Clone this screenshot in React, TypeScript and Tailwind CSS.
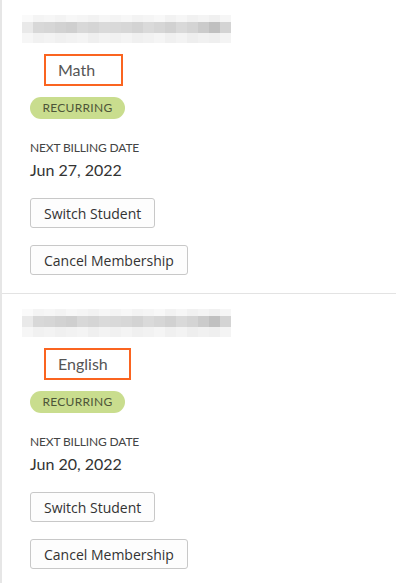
import React from 'react';

const topRow = ['#fafafa', '#f4f4f4', '#f6f6f6', '#f3f3f3', '#f7f7f7', '#f5f5f5', '#f2f2f2', '#f6f6f6', '#f4f4f4', '#f7f7f7', '#f3f3f3', '#f5f5f5', '#f8f8f8', '#f2f2f2', '#f6f6f6', '#f1f1f1', '#f4f4f4', '#f0f0f0', '#f6f6f6'];
const midRow = ['#e9e9e9', '#d8d8d8', '#d6d6d6', '#d2d2d2', '#cfcfcf', '#d8d8d8', '#d5d5d5', '#dadada', '#d9d9d9', '#d7d7d7', '#d3d3d3', '#dadada', '#d6d6d6', '#d1d1d1', '#d9d9d9', '#d4d4d4', '#cbcbcb', '#c0c0c0', '#d4d4d4'];
const botRow = ['#f6f6f6', '#f1f1f1', '#f3f3f3', '#f0f0f0', '#f2f2f2', '#f4f4f4', '#efefef', '#f3f3f3', '#f1f1f1', '#f4f4f4', '#f0f0f0', '#f2f2f2', '#f5f5f5', '#f0f0f0', '#f3f3f3', '#eeeeee', '#f1f1f1', '#efefef', '#f4f4f4'];

function BlurredName() {
    // pixelated placeholder for the redacted student name
    return (
        <div className="ml-[20px] flex flex-col w-[209px]">
            {[topRow, midRow, botRow].map((row, r) => (
                <div key={r} className={`flex ${r === 1 ? 'h-[11px]' : r === 0 ? 'h-[7px]' : 'h-[10px]'}`}>
                    {row.map((c, i) => (
                        <div key={i} className="w-[11px] h-full" style={{ backgroundColor: c }} />
                    ))}
                </div>
            ))}
        </div>
    );
}

function Membership({ subject, boxWidth, date }: { subject: string; boxWidth: string; date: string }) {
    return (
        <div className="pt-[15px] pb-[18px]">
            <BlurredName />
            <div className={`ml-[42px] mt-[11px] h-[32px] ${boxWidth} border-2 border-[#fa6420] pl-[12px] flex items-center text-[16px] text-[#555555]`}>
                {subject}
            </div>
            <div className="pl-[28px]">
                <div className="mt-[11px] w-[95px] h-[22px] rounded-full bg-[#c9dd8e] flex items-center justify-center text-[12px] text-[#4d5538] tracking-[0.3px]">
                    RECURRING
                </div>
                <div className="mt-[22px] text-[12px] leading-[14px] text-[#444444] tracking-[-0.15px]">NEXT BILLING DATE</div>
                <div className="mt-[5px] text-[16px] leading-[20px] text-[#333333]">{date}</div>
                <div className="mt-[18px] flex flex-col items-start gap-[17px] font-['Open_Sans',sans-serif]">
                    <button className="h-[30px] px-[13px] border border-[#c8c8c8] rounded-[3px] bg-[#fdfdfd] text-[14px] text-[#333333]">
                        Switch Student
                    </button>
                    <button className="h-[30px] px-[13px] border border-[#c8c8c8] rounded-[3px] bg-[#fdfdfd] text-[14px] text-[#333333]">
                        Cancel Membership
                    </button>
                </div>
            </div>
        </div>
    );
}

export default function App() {
    return (
        <div className="w-[396px] h-[583px] overflow-hidden bg-white border-l-2 border-[#e6e6e6] font-['Lato',sans-serif]">
            <Membership subject="Math" boxWidth="w-[79px]" date="Jun 27, 2022" />
            <div className="h-px bg-[#e3e3e3]" />
            <Membership subject="English" boxWidth="w-[87px]" date="Jun 20, 2022" />
        </div>
    );
}
